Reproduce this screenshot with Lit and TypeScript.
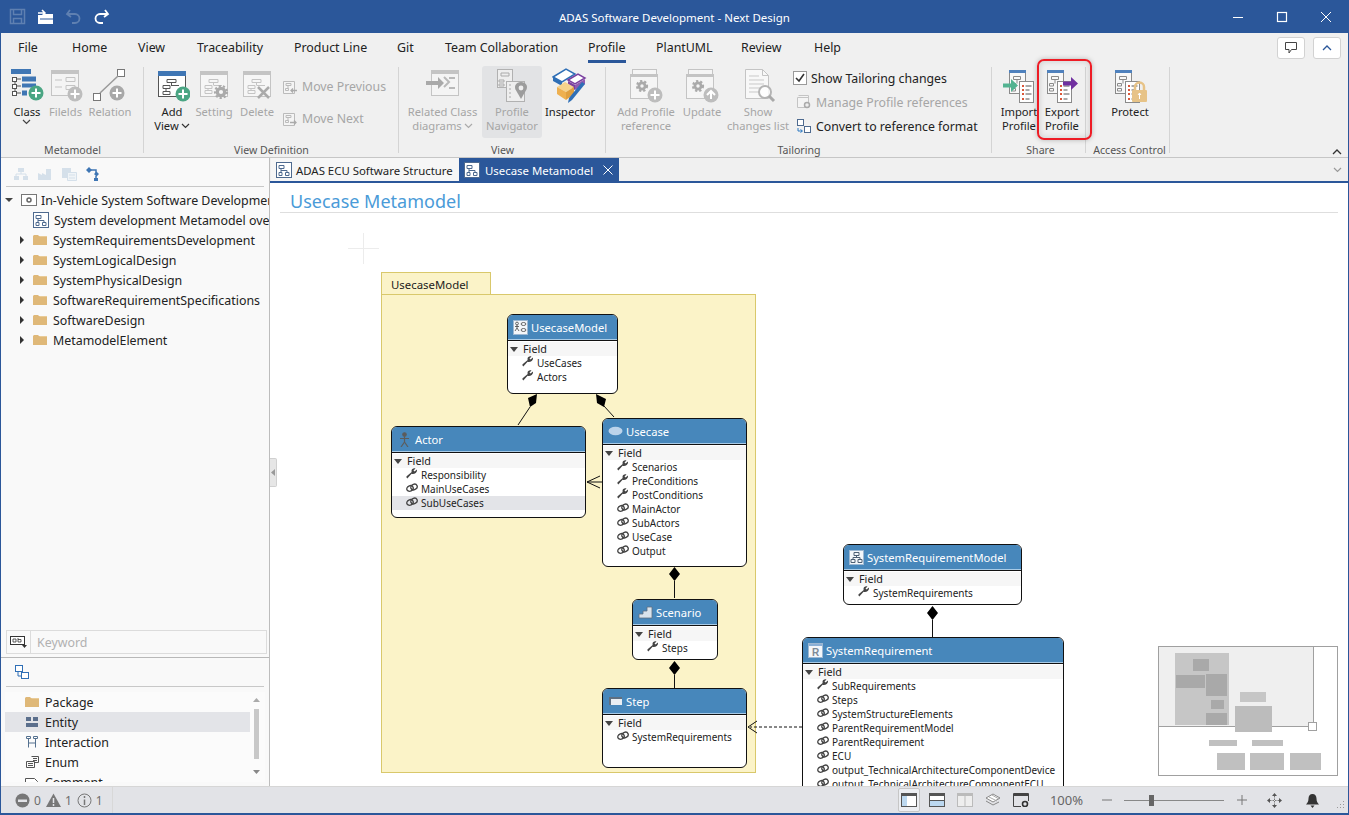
import { LitElement, html, css, svg } from "lit";
import { customElement } from "lit/decorators.js";

const GR = "#c4c4c4";
const BL = "#3f76b4";

const plus = (cx: number, cy: number, c: string, r = 7.5) => svg`
  <circle cx=${cx} cy=${cy} r=${r} fill=${c}/>
  <path d="M${cx - 4.5} ${cy}h9M${cx} ${cy - 4.5}v9" stroke="#fff" stroke-width="2"/>`;

// gear used by setting-like ribbon icons
const gear = (cx: number, cy: number, c: string, r = 5) => svg`
  <circle cx=${cx} cy=${cy} r=${r * 0.62} fill="none" stroke=${c} stroke-width=${r * 0.55}/>
  <circle cx=${cx} cy=${cy} r=${r} fill="none" stroke=${c} stroke-width="2.2" stroke-dasharray="2.2 2"/>`;

// small window with hierarchy inside
const win = (c: string, top: string, x = 4, y = 3, w = 27, h = 25) => svg`
  <rect x=${x + 0.5} y=${y + 0.5} width=${w} height=${h} fill="#f6f6f6" stroke=${c}/>
  <rect x=${x} y=${y} width=${w + 1} height="4" fill=${top}/>
  <path d="M${x + 9} ${y + 8.5}h9v3h-9zM${x + 5} ${y + 14.5}h7v3h-7zM${x + 5} ${y + 19.5}h7v3h-7zM${x + 14} ${y + 14.5}h8M${x + 13.5} ${y + 11.5}v3M${x + 8} ${y + 17.5}v2"
    fill="none" stroke=${c}/>`;

const profileDoc = (c: string) => svg`
  <rect x="3.500" y="2.500" width="16" height="23" fill="#f8f8f8" stroke="#8a8a8a"/>
  <rect x="3" y="2" width="17" height="3" fill="#4f81bd"/>
  <path d="M7.500 8.500h7v3h-7zM5.500 15.500h4v2.500h-4zM5.500 20.500h4v2.500h-4zM11 11.500v4" fill="none" stroke="#8a8a8a"/>
  <rect x="13.500" y="13.500" width="14" height="21" fill="#fff" stroke="#8a8a8a"/>
  <path d="M16 17h2v2h-2zM16 21h2v2h-2zM16 25h2v2h-2zM16 30h2v2h-2z" fill="#d9573a"/>
  <path d="M19.500 18h6M19.500 22h4M19.500 26h6M19.500 31h4" stroke=${c}/>`;

const ICONS: Record<string, unknown> = {
  cls: svg`<rect x="2" y="1" width="20" height="5" fill="${BL}"/>
    <path d="M6 9v18" stroke="#555"/><path d="M6 11h6M6 18h6M6 25h6" stroke="#555"/>
    <rect x="3.500" y="9.500" width="4" height="4" fill="#fff" stroke="#555"/>
    <rect x="3.500" y="16.500" width="4" height="4" fill="#fff" stroke="#555"/>
    <rect x="3.500" y="23.500" width="4" height="4" fill="#fff" stroke="#555"/>
    <rect x="13" y="8.500" width="14" height="5" fill="${BL}"/><rect x="13" y="15.500" width="14" height="4" fill="${BL}"/><rect x="13" y="22.500" width="5" height="5" fill="${BL}"/>
    ${plus(27, 25, "#4aa583")}`,
  fields: svg`<rect x="3.500" y="2.500" width="27" height="25" fill="#f4f4f4" stroke="${GR}"/><rect x="3" y="2" width="28" height="4" fill="${GR}"/>
    <path d="M7 12h7M7 19h7M18 9.500h9v4h-9zM18 17.500h9v4h-9z" fill="none" stroke="${GR}"/>${plus(27, 26, "#bdbdbd")}`,
  relation: svg`<rect x="25.500" y="1.500" width="7" height="7" fill="#fff" stroke="#777"/><rect x="1.500" y="25.500" width="7" height="7" fill="#fff" stroke="#777"/>
    <path d="M8 25L26 8" stroke="#999" stroke-width="1.500"/>${plus(25, 25, "#a8a8a8")}`,
  addview: svg`<rect x="4.500" y="3.500" width="27" height="25" fill="#fff" stroke="#555"/><rect x="4" y="3" width="28" height="5" fill="${BL}"/>
    <path d="M13 11.500h9v3h-9zM9 17.500h7v3h-7zM9 23.500h7v3h-7zM17 17.500h8M17.500 14.500v3M12 20.500v3" fill="none" stroke="#555"/>${plus(29, 26, "#4aa583")}`,
  setting: svg`${win(GR, GR)}${gear(25, 24, "#aaa", 6)}`,
  del: svg`${win(GR, GR)}<path d="M19 19l11 11M30 19L19 30" stroke="#aaa" stroke-width="2.500"/>`,
  related: svg`<rect x="6.500" y="2.500" width="27" height="25" fill="#f4f4f4" stroke="${GR}"/><rect x="6" y="2" width="28" height="4" fill="${GR}"/>
    <path d="M1 13h12v-4l6 6-6 6v-4H1z" fill="#a9a9a9"/><path d="M19 9l5 5-5 5M24 20h6M24 10h6" fill="none" stroke="#b9b9b9" stroke-width="2"/>`,
  nav: svg`<rect x="3.500" y="1.500" width="15" height="18" fill="#eee" stroke="#b1b1b1"/>
    <path d="M7 5h8v3H7zM5 12h5v2H5zM5 16h5v2H5z" fill="none" stroke="#aaa"/>
    <rect x="12.500" y="13.500" width="18" height="20" fill="#eee" stroke="#b1b1b1"/>
    <path d="M15 17h2M15 21h2M15 25h2M15 29h2" stroke="#aaa"/>
    <path d="M27 14c-5 0-7 4-5.500 7.500L27 31l5.500-9.500C34 18 32 14 27 14z" fill="#9c9c9c"/><circle cx="27" cy="20" r="2.400" fill="#eee"/>`,
  inspector: svg`<path d="M1 9L14 1l9 5-13 8z" fill="#fff" stroke="#2f6fb6" stroke-width="1.500"/><path d="M1 9v4l9 5v-4z" fill="#2f6fb6"/>
    <path d="M16 12l10-6 7 4-10 6z" fill="#fff" stroke="#7a3fa0" stroke-width="1.500"/><path d="M16 13l7 4v5l-7-4z" fill="#7a3fa0"/><path d="M23 17l10-6v5l-10 6z" fill="#8f5ab0"/>
    <path d="M5 19l8-5 9 5-8 5z" fill="#f6d38c"/><path d="M5 19v7l9 6v-8z" fill="#eeb050"/><path d="M14 24l8-5v7l-8 6z" fill="#e0a040"/>
    <path d="M33 16L20 32l-4 3 1-5L30 14z" fill="#2f6fb6"/>`,
  addref: svg`<rect x="4.500" y="1.500" width="24" height="20" fill="#f5f5f5" stroke="${GR}"/>
    <rect x="2.500" y="6.500" width="27" height="24" fill="#f5f5f5" stroke="${GR}"/><rect x="2" y="6" width="28" height="3" fill="${GR}"/>${gear(14, 18, "#aaa", 5)}${plus(27, 27, "#bdbdbd")}`,
  update: svg`<rect x="4.500" y="1.500" width="24" height="20" fill="#f5f5f5" stroke="${GR}"/>
    <rect x="2.500" y="6.500" width="27" height="24" fill="#f5f5f5" stroke="${GR}"/><rect x="2" y="6" width="28" height="3" fill="${GR}"/>${gear(14, 18, "#aaa", 5)}
    <circle cx="27" cy="27" r="7.500" fill="#bdbdbd"/><path d="M23 27l4-4 4 4M27 23v8" fill="none" stroke="#fff" stroke-width="2"/>`,
  changes: svg`<path d="M5.500 1.500h17l6 6v23h-23z" fill="#f8f8f8" stroke="${GR}"/><path d="M22.500 1.500v6h6" fill="none" stroke="${GR}"/>
    <path d="M9 8h10M9 12h15M9 16h15M9 20h12M9 24h10" stroke="#c9c9c9"/>
    <circle cx="25" cy="24" r="6" fill="#fff" fill-opacity=".8" stroke="#b4b4b4" stroke-width="2"/><path d="M29 28l5 5" stroke="#a9a9a9" stroke-width="3"/>`,
  imp: svg`<g transform="translate(5 0)">${profileDoc("#555")}</g><path d="M2 15.500h8V11l7 6.500-7 6.500v-4.500H2z" fill="#53b391"/>`,
  exp: svg`${profileDoc("#555")}<path d="M19 13.500h8V9l7 6.500-7 6.500v-4.500h-8z" fill="#7030a0"/>`,
  prot: svg`${profileDoc("#555")}<path d="M23 23v-4a4.500 4.500 0 0 1 9 0v4" fill="none" stroke="#e7c387" stroke-width="2.500"/>
    <rect x="20" y="22" width="15" height="12" rx="1" fill="#e7c387"/><path d="M27.500 25v6M26 27l1.500-2 1.500 2" fill="none" stroke="#fff"/>`,
};

const bigIcon = (k: string) => html`<svg class="big" viewBox="0 0 36 36">${ICONS[k]}</svg>`;
const chev = (c = "#444") => html`<svg class="chev" viewBox="0 0 9 6"><path d="M1 1l3.500 3.500L8 1" fill="none" stroke=${c} stroke-width="1.200"/></svg>`;

const diagramIcon = (c = "#4e6a8f", bg = "#fff") => html`<svg class="s16" viewBox="0 0 16 16">
  <rect x=".5" y=".5" width="15" height="15" fill=${bg} stroke=${c}/>
  <path d="M3 3.500h5v3H3zM3 10.500h3v3H3zM9.500 10.500h3.500v3H9.500zM5 6.500v4M5 8.500h6v2" fill="none" stroke=${c}/></svg>`;
const moveIcon = (d: string) => html`<svg class="s16" viewBox="0 0 16 16">
  <path d="M1.500 2.500h11v12h-11z" fill="#f4f4f4" stroke="#bbb"/>
  <path d="M4 4.500h5v2H4zM3.500 9.500h3v2h-3zM6 6.500v3" fill="none" stroke="#bbb"/>
  <path d=${d} fill="none" stroke="#aaa" stroke-width="1.300"/></svg>`;
const folder = () => html`<svg class="s14" viewBox="0 0 14 14"><path d="M0 3l1-1h4l1 1h8v9H0z" fill="#dfb878"/><path d="M0 4h6l1-1h7v1H0z" fill="#e9cb97"/></svg>`;
const wrench = () => html`<svg class="ri" viewBox="0 0 12 12"><path d="M11 1.500L8.500 3.500 7.500 2.500 9.500.5C7.500-.2 5.500 1 5.500 3c0 .5.100.8.200 1.100L.6 8.300c-.5.500 0 1.800.7 2.100l4.300-4.600C8 6.800 11.700 4.500 11 1.500z" fill="#444"/></svg>`;
const chain = () => html`<svg class="ri" viewBox="0 0 12 12"><g fill="none" stroke="#444" stroke-width="1.300"><ellipse cx="4" cy="6.500" rx="3.300" ry="2.700" transform="rotate(-25 4 6.500)"/><ellipse cx="8" cy="5" rx="3.300" ry="2.700" transform="rotate(-25 8 5)"/></g></svg>`;

const HEAD: Record<string, unknown> = {
  model: html`<svg class="hi" viewBox="0 0 15 15"><rect x=".5" y=".5" width="14" height="14" fill="#f4f7fa" stroke="#9db8d2"/><g fill="none" stroke="#444" stroke-width=".8"><circle cx="4" cy="3.500" r="1.400"/><path d="M4 5v3M2 6.500h4M4 8l-2 3M4 8l2 3"/><ellipse cx="10.500" cy="4" rx="2.400" ry="1.500"/><ellipse cx="10.500" cy="10" rx="2.400" ry="1.500"/></g></svg>`,
  actor: html`<svg class="hi" viewBox="0 0 15 15"><g fill="none" stroke="#5c5c5c" stroke-width="1.200"><circle cx="7.500" cy="2.500" r="1.700" fill="#5c5c5c"/><path d="M7.500 4v6M3 6.500h9M7.500 10l-3.500 5M7.500 10l3.500 5"/></g></svg>`,
  usecase: html`<svg class="hi" viewBox="0 0 15 15"><ellipse cx="7.500" cy="7" rx="7" ry="4.200" fill="#bcd3ea"/></svg>`,
  scenario: html`<svg class="hi" viewBox="0 0 15 15"><path d="M1 13V9h4V6h4V2h5v11z" fill="#d9e3ec" stroke="#5f6f80" stroke-width=".8"/></svg>`,
  step: html`<svg class="hi" viewBox="0 0 15 15"><rect x="1" y="3" width="13" height="8" fill="#e9eef3"/><path d="M1 3h13v2H3v6H1z" fill="#5f6f80"/></svg>`,
  reqmodel: html`<svg class="hi" viewBox="0 0 15 15"><rect x=".5" y=".5" width="14" height="14" fill="#f4f7fa" stroke="#9db8d2"/><path d="M5 2.500h5v3H5zM2 9.500h4v3H2zM9 9.500h4v3H9zM7.500 5.500v2M4 9.500v-2h7v2" fill="none" stroke="#4d5f73"/></svg>`,
  req: html`<svg class="hi" viewBox="0 0 15 15"><rect x=".5" y=".5" width="14" height="14" fill="#f4f7fa" stroke="#9db8d2"/><rect x="1" y="1" width="13" height="2" fill="#8bb0d6"/><text x="4" y="13" font-size="10" font-weight="700" fill="#7d8a97" font-family="Liberation Sans, sans-serif">R</text></svg>`,
};

type Row = [string, "w" | "c", boolean?];
interface Node { name: string; icon: string; x: number; y: number; w: number; h: number; rows: Row[]; }

const NODES: Node[] = [
  { name: "UsecaseModel", icon: "model", x: 507, y: 314, w: 111, h: 80, rows: [["UseCases", "w"], ["Actors", "w"]] },
  { name: "Actor", icon: "actor", x: 391, y: 426, w: 195, h: 92, rows: [["Responsibility", "w"], ["MainUseCases", "c"], ["SubUseCases", "c", true]] },
  { name: "Usecase", icon: "usecase", x: 602, y: 418, w: 145, h: 149, rows: [["Scenarios", "w"], ["PreConditions", "w"], ["PostConditions", "w"], ["MainActor", "c"], ["SubActors", "c"], ["UseCase", "c"], ["Output", "c"]] },
  { name: "Scenario", icon: "scenario", x: 632, y: 599, w: 86, h: 61, rows: [["Steps", "w"]] },
  { name: "Step", icon: "step", x: 602, y: 688, w: 145, h: 80, rows: [["SystemRequirements", "c"]] },
  { name: "SystemRequirementModel", icon: "reqmodel", x: 843, y: 544, w: 179, h: 61, rows: [["SystemRequirements", "w"]] },
  { name: "SystemRequirement", icon: "req", x: 802, y: 637, w: 262, h: 300, rows: [["SubRequirements", "w"], ["Steps", "c"], ["SystemStructureElements", "c"], ["ParentRequirementModel", "c"], ["ParentRequirement", "c"], ["ECU", "c"], ["output_TechnicalArchitectureComponentDevice", "c"], ["output_TechnicalArchitectureComponentECU", "c"]] },
];

const TABS = ["File", "Home", "View", "Traceability", "Product Line", "Git", "Team Collaboration", "Profile", "PlantUML", "Review", "Help"];
const TREE = ["SystemRequirementsDevelopment", "SystemLogicalDesign", "SystemPhysicalDesign", "SoftwareRequirementSpecifications", "SoftwareDesign", "MetamodelElement"];

// minimap blocks, in minimap pixels: x, y, w, h, grey
const MINI: [number, number, number, number, string][] = [
  [16, 6, 54, 72, "#c6c6c6"], [34, 12, 16, 12, "#a9a9a9"], [17, 28, 29, 13, "#a9a9a9"], [47, 27, 21, 22, "#a9a9a9"],
  [52, 53, 13, 9, "#a9a9a9"], [47, 66, 21, 12, "#a9a9a9"], [81, 45, 26, 10, "#c6c6c6"], [76, 59, 37, 26, "#bcbcbc"],
  [50, 93, 28, 6, "#c0c0c0"], [93, 93, 31, 6, "#c0c0c0"], [58, 106, 28, 17, "#c0c0c0"], [91, 106, 34, 17, "#c0c0c0"], [131, 106, 31, 17, "#c0c0c0"],
];

@customElement("app-root")
export class AppRoot extends LitElement {
  static styles = css`
    :host { display: block; font-family: "Noto Sans", sans-serif; font-size: 12px; color: #222; }
    svg { display: block; flex: none; }
    .app { width: 1349px; height: 815px; box-sizing: border-box; border: 1px solid #2b579a; border-top: 0; border-bottom-width: 2px;
      display: flex; flex-direction: column; overflow: hidden; position: relative; background: #f0f0f0; }
    .title { height: 33px; flex: none; background: #2b579a; margin: 0 -1px; display: grid; grid-template-columns: 1fr auto 1fr; align-items: center; color: #fff; font-size: 11.500px; }
    .ttext { padding-top: 2px; }
    .qat { display: flex; gap: 11px; padding-left: 9px; align-items: center; }
    .qat svg { width: 17px; height: 17px; }
    .wctl { display: flex; justify-self: end; gap: 32px; padding-right: 17px; }
    .wctl svg { width: 12px; height: 12px; }
    .menu { height: 33px; flex: none; display: grid; grid-template-columns: 54px 66px 59px 97px 103px 48px 143px 68px 85px 73px 1fr; padding-left: 17px; align-items: start; font-size: 12.400px; position: relative; }
    .menu span { justify-self: start; height: 27px; line-height: 30px; }
    .menu .on { border-bottom: 3px solid #2b579a; }
    .mbtns { position: absolute; right: 7px; top: 4px; display: flex; gap: 8px; }
    .mbtns div { width: 26px; height: 20px; border: 1px solid #d2d2d2; border-radius: 3px; background: #fff; display: flex; align-items: center; justify-content: center; }
    .ribbon { height: 92px; flex: none; box-sizing: border-box; display: flex; border-bottom: 1px solid #c6c6c6; position: relative; }
    .grp { flex: none; display: flex; flex-direction: column; box-sizing: border-box; position: relative; }
    .grp::after { content: ""; position: absolute; right: 0; top: 1px; bottom: 4px; width: 1px; background: #d4d4d4; }
    .btns { flex: 1; display: flex; min-height: 0; }
    .glabel { height: 19px; text-align: center; font-size: 10.600px; color: #555; line-height: 24px; white-space: nowrap; }
    .g1 { width: 143px; } .g1 .btns { padding-left: 6px; }
    .g2 { width: 255px; } .g2 .btns { padding-left: 8px; }
    .g3 { width: 207px; } .g3 .btns { padding-left: 4px; }
    .g4 { width: 386px; } .g4 .btns { padding-left: 6px; }
    .g5 { width: 94px; } .g5 .btns { padding-left: 9px; } .g5 .glabel { padding-left: 3px; }
    .g6 { width: 84px; } .g6 .btns { padding-left: 19px; } .g6 .glabel { padding-left: 3px; }
    .b { flex: none; display: flex; flex-direction: column; align-items: center; padding-top: 2px; font-size: 11.200px; line-height: 14px; text-align: center; box-sizing: border-box; height: 72px; white-space: nowrap; color: #222; overflow: hidden; }
    .b .lab { margin-top: 1px; display: flex; flex-direction: column; align-items: center; }
    .b .ln { display: flex; align-items: center; gap: 2px; }
    .off { color: #a6a6a6; }
    .b.sel { background: #e2e3e5; border-radius: 3px; }
    .big { width: 36px; height: 36px; }
    .chev { width: 9px; height: 6px; }
    .small { display: flex; flex-direction: column; gap: 1px; padding: 5px 0 0 4px; font-size: 12.300px; color: #a6a6a6; }
    .small div { height: 31px; display: flex; align-items: center; gap: 4px; white-space: nowrap; }
    .opts { display: flex; flex-direction: column; margin-left: 1px; font-size: 12.300px; white-space: nowrap; }
    .opts div { height: 24px; display: flex; align-items: center; gap: 4px; }
    .opts .ind { margin-left: 3px; }
    .cb { width: 12px; height: 12px; border: 1px solid #9a9a9a; background: #fff; display: flex; align-items: center; justify-content: center; }
    .s16 { width: 16px; height: 16px; }
    .s14 { width: 14px; height: 14px; }
    .red { position: absolute; left: 1036px; top: -7px; width: 51px; height: 77px; border: 2px solid #ee1c25; border-radius: 7px; box-shadow: 0 0 5px rgba(0,0,0,.25), inset 0 0 6px rgba(0,0,0,.16); pointer-events: none; }
    .collapse { position: absolute; right: 6px; bottom: 2px; }
    .tabs { height: 25px; flex: none; display: flex; margin-left: 269px; padding-left: 1px; border-bottom: 2px solid #2b579a; box-sizing: border-box; background: #f0f0f0; align-items: stretch; position: relative; font-size: 11.400px; }
    .tab { display: flex; align-items: center; gap: 4px; padding: 1px 0 0 5px; width: 188px; box-sizing: border-box; white-space: nowrap; background: #f6f6f6; }
    .tab.on { background: #2b579a; color: #fff; width: 160px; padding-left: 5px; gap: 5px; }
    .tab .x { margin-left: auto; margin-right: 6px; width: 10px; height: 10px; }
    .tabs > .chev { position: absolute; right: 6px; top: 9px; }
    .main { flex: 1; min-height: 0; display: flex; position: relative; }
    .left { width: 268px; flex: none; border-right: 1px solid #bdbdbd; background: #f9f9f9; display: flex; flex-direction: column; margin-top: -25px; z-index: 1; }
    .ltool { height: 29px; flex: none; box-sizing: border-box; margin: 0 5px; display: flex; align-items: center; gap: 8.500px; padding: 3px 8px 0; border-bottom: 1px solid #c8c8c8; }
    .tree { flex: 1; padding-top: 3px; overflow: hidden; white-space: nowrap; font-size: 12.400px; }
    .tr { height: 20px; display: flex; align-items: center; overflow: hidden; }
    .tw { width: 8px; height: 8px; flex: none; margin: 0 7px 0 17px; }
    .tr .ic { width: 14px; margin-right: 6px; flex: none; display: flex; justify-content: center; }
    .tr .ic16 { width: 16px; margin-right: 4px; flex: none; }
    .t0 { width: 8px; height: 8px; flex: none; margin: 0 8px 0 4px; }
    .t1 { padding-left: 32px; }
    .t1 .ic16 { margin-right: 5px; }
    .search { height: 24px; flex: none; box-sizing: border-box; margin: 0 2px 3px 5px; border: 1px solid #dcdcdc; display: flex; align-items: center; font-size: 12.400px; color: #b1b1b1; }
    .search .sic { width: 23px; height: 22px; border-right: 1px solid #dcdcdc; display: flex; align-items: center; justify-content: center; margin-right: 6px; }
    .ptool { height: 29px; flex: none; box-sizing: border-box; margin: 0 5px; border-bottom: 1px solid #c8c8c8; display: flex; align-items: center; padding-left: 9px; }
    .psep { height: 1px; background: #b8b8b8; flex: none; }
    .pal { height: 90px; flex: none; margin: 5px 4px 4px; overflow: hidden; position: relative; background: #fbfbfb; font-size: 12.400px; }
    .pr { height: 20px; width: 245px; display: flex; align-items: center; gap: 6px; padding-left: 20px; box-sizing: border-box; }
    .pr.sel { background: #e3e4e8; }
    .sb { position: absolute; right: 5px; top: 0; bottom: 0; width: 7px; }
    .sb i { position: absolute; left: 1px; top: 17px; width: 5px; height: 50px; background: #c8c8c8; }
    .sb svg { position: absolute; left: 0; width: 7px; height: 4px; }
    .sb .up { top: 6px; }
    .sb .dn { top: 78px; }
    .canvas { flex: 1; background: #fff; position: relative; overflow: hidden; }
    .ptitle { margin: 0 10px; height: 30px; box-sizing: border-box; border-bottom: 1px solid #dedede; font-size: 18px; line-height: 37px; color: #4a9bd8; padding-left: 10px; }
    .wires { position: absolute; left: 0; top: 0; }
    .pkg { position: absolute; left: 111px; top: 89px; }
    .pkg .ptab { width: 110px; height: 22px; box-sizing: border-box; background: #fbf3c8; border: 1px solid #d9c86b; border-bottom: 0; padding-left: 9px; line-height: 24px; font-size: 11.400px; }
    .pkg .pbody { width: 375px; height: 479px; box-sizing: border-box; background: #fbf3c8; border: 1px solid #d9c86b; }
    .node { position: absolute; box-sizing: border-box; background: #fff; border: 1px solid #111; border-radius: 6px; overflow: hidden; font-size: 10px; line-height: 14px; }
    .nh { height: 26px; background: #4787bb; color: #fff; font-size: 11.200px; display: flex; align-items: center; gap: 3px; padding-left: 5px; border-bottom: 1px solid #111; box-shadow: inset 0 -1px 0 #a9cbe6; box-sizing: border-box; white-space: nowrap; }
    .hi { width: 15px; height: 15px; }
    .nb { padding-top: 1px; }
    .fld { height: 14px; display: flex; align-items: center; background: #f6f6f6; padding-left: 2px; gap: 5px; font-size: 10.800px; }
    .fld svg { width: 8px; height: 5px; }
    .rw { height: 14px; display: flex; align-items: center; padding-left: 14px; gap: 3px; white-space: nowrap; color: #222; }
    .rw.sel { background: #e3e4e8; }
    .ri { width: 12px; height: 12px; margin-top: -3px; }
    .cross { position: absolute; left: 78px; top: 50px; }
    .mini { position: absolute; left: 888px; top: 463px; width: 180px; height: 130px; box-sizing: border-box; background: #fff; border: 1px solid #a0a0a0; }
    .mini .vp { position: absolute; left: 0; top: 0; width: 154px; height: 79px; background: #efefef; border-right: 1px solid #a0a0a0; border-bottom: 1px solid #a0a0a0; }
    .mini .bk { position: absolute; }
    .mini .hd { position: absolute; left: 149px; top: 75px; width: 7px; height: 7px; border: 1px solid #a0a0a0; background: #fff; z-index: 2; }
    .handle { position: absolute; left: 269px; top: 275px; width: 7px; height: 29px; background: #e6e6e6; border: 1px solid #d0d0d0; border-left: 0; box-sizing: border-box; border-radius: 0 2px 2px 0; display: flex; align-items: center; justify-content: center; z-index: 2; }
    .status { height: 27px; flex: none; background: #e2e3e7; border-top: 1px solid #d6d6d6; box-sizing: border-box; display: flex; align-items: center; color: #6d6d6d; font-size: 12px; position: relative; z-index: 3; }
    .st-l { display: flex; align-items: center; padding-left: 14px; height: 100%; width: 112px; box-sizing: border-box; border-right: 1px solid #d8d8d8; }
    .st-l svg { width: 15px; height: 15px; }
    .st-l span { margin: 0 5px 0 4px; }
    .st-r { margin-left: auto; display: flex; align-items: center; height: 100%; padding-right: 3px; }
    .lay { width: 22px; height: 24px; box-sizing: border-box; display: flex; align-items: center; justify-content: center; margin-right: 6px; }
    .lay.on { border: 1px solid #c6c6c6; background: #eceef2; border-radius: 2px; }
    .lay svg { width: 16px; height: 14px; }
    .zoom { font-size: 13px; margin: 0 19px 0 12px; color: #666; }
    .slider { width: 100px; height: 1px; background: #888; position: relative; margin: 0 13px 0 12px; }
    .slider i { position: absolute; left: 25px; top: -5px; width: 5px; height: 11px; background: #666; }
    .zb { width: 10px; height: 10px; }
    .move { width: 15px; height: 15px; margin: 0 23px 0 20px; }
    .bell { width: 15px; height: 15px; margin-right: 16px; }
    .grip { width: 9px; height: 9px; margin-top: 8px; }
  `;

  private big(k: string, l1: string, l2: string, w: number, off = false, dd = false, extra = "") {
    return html`<div class="b ${off ? "off" : ""} ${extra}" style="width:${w}px">
      ${bigIcon(k)}
      <div class="lab"><span>${l1}</span>${l2 ? html`<span class="ln">${l2}${dd ? chev(off ? "#aaa" : "#333") : ""}</span>` : ""}</div>
    </div>`;
  }

  private node(n: Node) {
    return html`<div class="node" style="left:${n.x - 270}px;top:${n.y - 183}px;width:${n.w}px;height:${n.h}px">
      <div class="nh">${HEAD[n.icon]}<span>${n.name}</span></div>
      <div class="nb">
        <div class="fld"><svg viewBox="0 0 8 5"><path d="M0 0h8L4 5z" fill="#444"/></svg>Field</div>
        ${n.rows.map((r) => html`<div class="rw ${r[2] ? "sel" : ""}">${r[1] === "w" ? wrench() : chain()}<span>${r[0]}</span></div>`)}
      </div>
    </div>`;
  }

  private wires() {
    return html`<svg class="wires" width="1079" height="604" viewBox="270 183 1079 604">
      <path d="M530 407L518 425M604 406L614 417M602 482H587M674.500 581V598M674.500 675V688M932.500 620V637" stroke="#111" fill="none"/>
      <path d="M537 394L528 398 530 407 536 403zM596 394L606 399 604 407 597 403zM674.500 567L680 574 674.500 581 669 574zM674.500 661L680 668 674.500 675 669 668zM932.500 606L938 613 932.500 620 927 613z" fill="#000"/>
      <path d="M600 476L587 482 600 488M757 721L748 727 757 733" stroke="#111" fill="none"/>
      <path d="M802 727H750" stroke="#111" stroke-dasharray="3 2" fill="none"/>
    </svg>`;
  }

  render() {
    return html`<div class="app">
      <div class="title">
        <div class="qat">
          <svg viewBox="0 0 17 17"><path d="M1.500 1.500h14v14h-14zM4.500 1.500v5h8v-5M4.500 15.500v-5h8v5" fill="none" stroke="#5f80b1" stroke-width="1.500"/></svg>
          <svg viewBox="0 0 17 17"><path d="M1 7h5l1-1h9v10H1z" fill="#fff"/><path d="M1 5h7M5 2l3 3-3 3" fill="none" stroke="#fff" stroke-width="1.500"/><path d="M3 11h13" stroke="#2b579a"/></svg>
          <svg viewBox="0 0 17 17"><path d="M5 2L2 6l4 3M2 6h8a4 4 0 0 1 0 9H7" fill="none" stroke="#5f80b1" stroke-width="1.800"/></svg>
          <svg viewBox="0 0 17 17"><path d="M12 2l3 4-4 3M15 6H7a4 4 0 0 0 0 9h3" fill="none" stroke="#fff" stroke-width="1.800"/></svg>
        </div>
        <div class="ttext">ADAS Software Development - Next Design</div>
        <div class="wctl">
          <svg viewBox="0 0 12 12"><path d="M1 6.500h10" stroke="#fff"/></svg>
          <svg viewBox="0 0 12 12"><rect x="1.500" y="1.500" width="9" height="9" fill="none" stroke="#fff" stroke-width="1.200"/></svg>
          <svg viewBox="0 0 12 12"><path d="M1 1l10 10M11 1L1 11" stroke="#fff"/></svg>
        </div>
      </div>

      <div class="menu">
        ${TABS.map((t) => html`<span class=${t === "Profile" ? "on" : ""}>${t}</span>`)}
        <div class="mbtns">
          <div><svg width="14" height="14" viewBox="0 0 14 14"><path d="M1.500 1.500h11v7H7.500L5 12V8.500H1.500z" fill="none" stroke="#444"/></svg></div>
          <div><svg width="10" height="6" viewBox="0 0 10 6"><path d="M1 5l4-4 4 4" fill="none" stroke="#2b579a" stroke-width="1.300"/></svg></div>
        </div>
      </div>

      <div class="ribbon">
        <div class="grp g1"><div class="btns">
          <div class="b" style="width:40px">${bigIcon("cls")}<div class="lab"><span>Class</span><span class="ln">${chev()}</span></div></div>
          ${this.big("fields", "Filelds", "", 37, true)}
          ${this.big("relation", "Relation", "", 52, true)}
        </div><div class="glabel">Metamodel</div></div>

        <div class="grp g2"><div class="btns">
          ${this.big("addview", "Add", "View", 40, false, true)}
          ${this.big("setting", "Setting", "", 44, true)}
          ${this.big("del", "Delete", "", 42, true)}
          <div class="small">
            <div>${moveIcon("M15 11.500H9M11 9.500l-2 2 2 2")}Move Previous</div>
            <div>${moveIcon("M8 11.500h6M12 9.500l2 2-2 2")}Move Next</div>
          </div>
        </div><div class="glabel">View Definition</div></div>

        <div class="grp g3"><div class="btns">
          ${this.big("related", "Related Class", "diagrams", 79, true, true)}
          ${this.big("nav", "Profile", "Navigator", 60, true, false, "sel")}
          ${this.big("inspector", "Inspector", "", 56)}
        </div><div class="glabel">View</div></div>

        <div class="grp g4"><div class="btns">
          ${this.big("addref", "Add Profile", "reference", 68, true)}
          ${this.big("update", "Update", "", 44, true)}
          ${this.big("changes", "Show", "changes list", 68, true)}
          <div class="opts">
            <div><span class="cb"><svg width="10" height="10" viewBox="0 0 10 10"><path d="M1 5l3 3 5-7" fill="none" stroke="#333" stroke-width="1.600"/></svg></span>Show Tailoring changes</div>
            <div class="off ind"><svg class="s16" viewBox="0 0 16 16"><path d="M2.500 1.500h10v3M1.500 3.500h11v10h-11z" fill="#f4f4f4" stroke="#c4c4c4"/><circle cx="11" cy="11" r="2.500" fill="#eee" stroke="#aaa" stroke-width="1.500"/></svg>Manage Profile references</div>
            <div class="ind"><svg class="s16" viewBox="0 0 16 16"><rect x="1.500" y="1.500" width="6" height="6" fill="#fff" stroke="#4e6a8f"/><rect x="8.500" y="8.500" width="6" height="6" fill="#fff" stroke="#4e6a8f"/><path d="M2 10v3h4M4.500 11.500L6.500 13l-2 1.500" fill="none" stroke="#2b79c2"/></svg>Convert to reference format</div>
          </div>
        </div><div class="glabel">Tailoring</div></div>

        <div class="grp g5"><div class="btns">
          ${this.big("imp", "Import", "Profile", 36)}
          ${this.big("exp", "Export", "Profile", 50)}
        </div><div class="glabel">Share</div></div>

        <div class="grp g6"><div class="btns">
          ${this.big("prot", "Protect", "", 50)}
        </div><div class="glabel">Access Control</div></div>

        <div class="red"></div>
        <svg class="collapse" width="10" height="6" viewBox="0 0 10 6"><path d="M1 5l4-4 4 4" fill="none" stroke="#333" stroke-width="1.300"/></svg>
      </div>

      <div class="tabs">
        <div class="tab">${diagramIcon()}<span>ADAS ECU Software Structure</span></div>
        <div class="tab on">${diagramIcon("#4e6a8f", "#fff")}<span>Usecase Metamodel</span>
          <svg class="x" viewBox="0 0 10 10"><path d="M.5.5l9 9M9.500.5l-9 9" stroke="#fff"/></svg></div>
        ${chev("#999")}
      </div>

      <div class="main">
        <div class="left">
          <div class="ltool">
            <svg class="s14" viewBox="0 0 14 14"><path d="M4 1h6v4H4zM0 9h5v4H0zM9 9h5v4H9z" fill="#d5e0ea"/><path d="M2 9V7h10v2M7 5v2" stroke="#d5e0ea" fill="none"/></svg>
            <svg class="s16" viewBox="0 0 16 16"><path d="M1 14V7l4 2V7l4 2V3h5v11z" fill="#d5e0ea"/></svg>
            <svg class="s16" viewBox="0 0 16 16"><path d="M1 2h9v10H1z" fill="#d5e0ea"/><path d="M6.500 6.500h9v8h-9zM8 9h6M8 12h6" fill="#f0f4f7" stroke="#d5e0ea"/></svg>
            <svg class="s14" viewBox="0 0 14 14"><path d="M0 3l3-3 3 3-3 3zM8 7l2.500-2.500L13 7l-2.500 2.500zM8 11h4v3H8z" fill="#3f76b4"/><path d="M4 3h6v3M10 9v3" stroke="#3f76b4" fill="none" stroke-width="1.500"/></svg>
          </div>
          <div class="tree">
            <div class="tr">
              <svg class="t0" viewBox="0 0 8 8"><path d="M0 2h8L4 6z" fill="#444"/></svg>
              <div class="ic16"><svg class="s16" viewBox="0 0 16 16"><rect x=".5" y="2.500" width="15" height="11" fill="#fff" stroke="#777"/><circle cx="8" cy="8" r="2" fill="none" stroke="#666" stroke-width="1.500"/></svg></div>
              <span>In-Vehicle System Software Development</span>
            </div>
            <div class="tr t1"><div class="ic16">${diagramIcon()}</div><span>System development Metamodel overview</span></div>
            ${TREE.map((t) => html`<div class="tr">
              <svg class="tw" viewBox="0 0 8 8"><path d="M2 0l4 4-4 4z" fill="#333"/></svg>
              <div class="ic">${folder()}</div><span>${t}</span></div>`)}
          </div>
          <div class="search">
            <div class="sic"><svg width="17" height="12" viewBox="0 0 17 12"><rect x=".5" y=".5" width="14" height="8" fill="#fff" stroke="#333"/><path d="M3 3h3v3H3zM8 2v4h3V3.500H8" fill="none" stroke="#333" stroke-width=".8"/><path d="M12 9h5l-2.500 3z" fill="#333"/></svg></div>
            Keyword
          </div>
          <div class="psep"></div>
          <div class="ptool">
            <svg class="s14" viewBox="0 0 14 14"><rect x=".5" y=".5" width="7" height="6" fill="#fff" stroke="#2f6fb6"/><rect x="6.500" y="7.500" width="7" height="6" fill="#fff" stroke="#2f6fb6"/><path d="M3 7v4h3" fill="none" stroke="#2f6fb6"/></svg>
          </div>
          <div class="pal">
            <div class="pr">${folder()}Package</div>
            <div class="pr sel"><svg class="s14" viewBox="0 0 14 14"><path d="M1 2h5v4H1zM8 2h5v4H8zM1 8h12v4H1z" fill="#5b6f8c"/></svg>Entity</div>
            <div class="pr"><svg class="s14" viewBox="0 0 14 14"><path d="M1.500 1.500h4v2h-4zM8.500 1.500h4v2h-4zM3.500 3.500v9M10.500 3.500v9M3.500 8h7" fill="none" stroke="#54708f"/></svg>Interaction</div>
            <div class="pr"><svg class="s14" viewBox="0 0 14 14"><path d="M1.500 6.500h8v6h-8zM6.500 1.500h7v6h-4M3 8.500h5M3 10.500h5M8 3.500h4M8 5.500h4" fill="none" stroke="#555"/></svg>Enum</div>
            <div class="pr"><svg class="s14" viewBox="0 0 14 14"><path d="M.5 3.500h9l3 3v6H.5z" fill="#fff" stroke="#555"/></svg>Comment</div>
            <div class="sb">
              <svg class="up" viewBox="0 0 7 4"><path d="M3.500 0L7 4H0z" fill="#aaa"/></svg>
              <i></i>
              <svg class="dn" viewBox="0 0 7 4"><path d="M0 0h7L3.500 4z" fill="#888"/></svg>
            </div>
          </div>
        </div>

        <div class="handle"><svg width="4" height="7" viewBox="0 0 4 7"><path d="M4 0v7L0 3.500z" fill="#999"/></svg></div>

        <div class="canvas">
          <div class="ptitle">Usecase Metamodel</div>
          <svg class="cross" width="31" height="31" viewBox="0 0 31 31"><path d="M0 15.500h31M15.500 0v31" stroke="#ececec"/></svg>
          <div class="pkg"><div class="ptab">UsecaseModel</div><div class="pbody"></div></div>
          ${this.wires()}
          ${NODES.map((n) => this.node(n))}
          <div class="mini">
            <div class="vp"></div>
            ${MINI.map((m) => html`<div class="bk" style="left:${m[0]}px;top:${m[1]}px;width:${m[2]}px;height:${m[3]}px;background:${m[4]}"></div>`)}
            <div class="hd"></div>
          </div>
        </div>
      </div>

      <div class="status">
        <div class="st-l">
          <svg viewBox="0 0 15 15"><circle cx="7.500" cy="7.500" r="7" fill="#777"/><rect x="3" y="6.500" width="9" height="2.500" fill="#e2e3e7"/></svg><span>0</span>
          <svg viewBox="0 0 15 15"><path d="M7.500 .5L15 14H0z" fill="#777"/><path d="M7.500 5v5M7.500 11v2" stroke="#e2e3e7" stroke-width="1.500"/></svg><span>1</span>
          <svg viewBox="0 0 15 15"><circle cx="7.500" cy="7.500" r="6.500" fill="none" stroke="#777"/><path d="M7.500 3v2M7.500 6.500V12" stroke="#777" stroke-width="1.500"/></svg><span>1</span>
        </div>
        <div class="st-r">
          <div class="lay on"><svg viewBox="0 0 16 14"><rect x=".5" y=".5" width="15" height="13" fill="#fff" stroke="#555"/><rect x="1" y="1" width="14" height="2" fill="#555"/><rect x="1" y="3" width="5" height="10" fill="#bcd8f0"/></svg></div>
          <div class="lay"><svg viewBox="0 0 16 14"><rect x=".5" y=".5" width="15" height="13" fill="#fff" stroke="#555"/><rect x="1" y="1" width="14" height="2" fill="#555"/><rect x="1" y="8" width="14" height="5" fill="#bcd8f0"/><path d="M1 7.500h14" stroke="#555"/></svg></div>
          <div class="lay"><svg viewBox="0 0 16 14"><rect x=".5" y=".5" width="15" height="13" fill="#eee" stroke="#bbb"/><rect x="1" y="1" width="14" height="2" fill="#bbb"/><path d="M8 3v10" stroke="#bbb"/></svg></div>
          <div class="lay"><svg viewBox="0 0 16 14"><path d="M1 5l7-4 7 4-7 4z" fill="#fff" stroke="#888"/><path d="M1 8l7 4 6-3" fill="none" stroke="#888"/><path d="M4 4l8 4M7 2l7 4" stroke="#aaa"/></svg></div>
          <div class="lay"><svg viewBox="0 0 16 14"><path d="M8 13.500H.5V.5h15V8" fill="none" stroke="#444"/><rect x="1" y="1" width="14" height="2" fill="#444"/><circle cx="12" cy="11" r="2.500" fill="none" stroke="#333" stroke-width="1.600"/></svg></div>
          <span class="zoom">100%</span>
          <svg class="zb" viewBox="0 0 10 10"><path d="M0 5h10" stroke="#777"/></svg>
          <div class="slider"><i></i></div>
          <svg class="zb" viewBox="0 0 10 10"><path d="M0 5h10M5 0v10" stroke="#777"/></svg>
          <svg class="move" viewBox="0 0 15 15"><path d="M7.500 0l2.500 3H5zM7.500 15L5 12h5zM0 7.500L3 5v5zM15 7.500L12 5v5z" fill="#555"/><path d="M7.500 3v9M3 7.500h9" stroke="#777" stroke-dasharray="1.500 1"/></svg>
          <svg class="bell" viewBox="0 0 15 15"><path d="M7.500 1C5 1 3.500 3 3.500 5.500c0 3-1 4.500-2.500 6h13c-1.500-1.500-2.500-3-2.500-6C11.500 3 10 1 7.500 1z" fill="#333"/><path d="M5.500 12.500h4L7.500 15z" fill="#333"/></svg>
          <svg class="grip" viewBox="0 0 9 9"><path d="M7 1h1v1H7zM4 4h1v1H4zM7 4h1v1H7zM1 7h1v1H1zM4 7h1v1H4zM7 7h1v1H7z" fill="#999"/></svg>
        </div>
      </div>
    </div>`;
  }
}
